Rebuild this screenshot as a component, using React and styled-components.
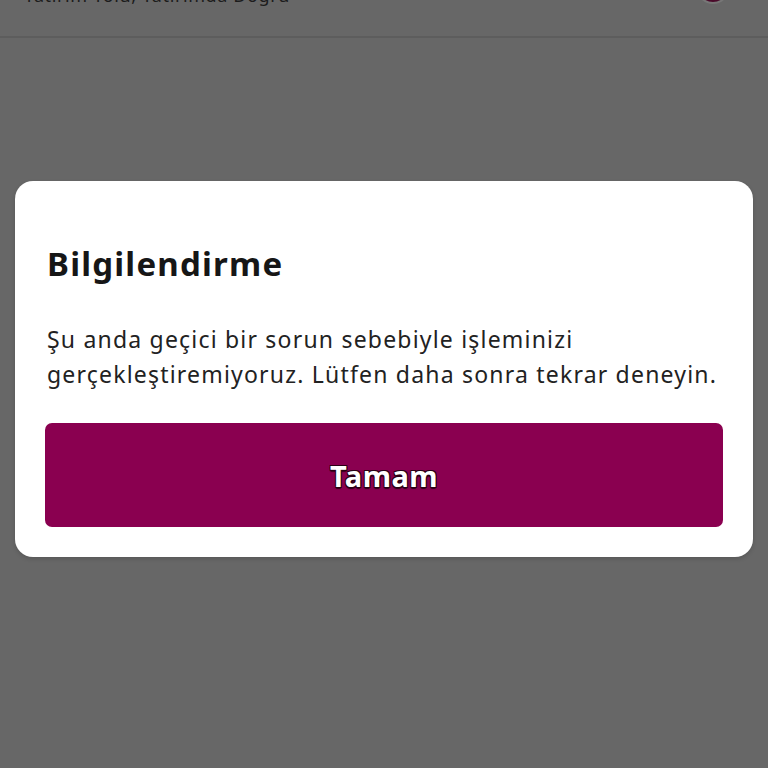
import styled, { createGlobalStyle } from "styled-components";

const Global = createGlobalStyle`
  html, body {
    margin: 0;
    padding: 0;
    background: #676767;
    font-family: "Noto Sans", Lato, sans-serif;
    overflow: hidden;
  }
`;

// page is scrolled a little, so the header is cut off at the top
const Page = styled.div`
  margin-top: -30px;
  height: 798px;
  background: #676767;
  display: flex;
  flex-direction: column;
`;

const Header = styled.header`
  height: 68px;
  border-bottom: 2px solid #5d5d5d;
  display: flex;
  align-items: center;
  justify-content: space-between;
  padding: 0 38px 0 24px;
  box-sizing: border-box;
`;

const HeaderTitle = styled.h1`
  margin: 0 0 16px;
  font-size: 18px;
  font-weight: 400;
  letter-spacing: 0.6px;
  color: #1c1c1c;
`;

const Avatar = styled.div`
  width: 30px;
  height: 30px;
  border-radius: 50%;
  background: #4a0a2a;
  border: 2px solid #777777;
  margin-bottom: 32px;
`;

const Body = styled.main`
  padding: 143px 15px 0;
`;

const Dialog = styled.section`
  background: #ffffff;
  border-radius: 18px;
  padding: 60px 30px 30px;
  box-shadow: 0 2px 4px rgba(0, 0, 0, 0.15);
`;

const Title = styled.h2`
  margin: 0 0 0 2px;
  font-size: 33px;
  line-height: 46px;
  font-weight: 700;
  letter-spacing: 1.2px;
  color: #161616;
`;

const Message = styled.p`
  margin: 35px 0 31px 2px;
  font-size: 23px;
  line-height: 35px;
  letter-spacing: 1.2px;
  color: #222222;
`;

const Button = styled.button`
  display: block;
  width: 100%;
  height: 104px;
  border: none;
  border-radius: 7px;
  background: #8a0050;
  color: #ffffff;
  font-family: inherit;
  font-size: 29px;
  font-weight: 700;
  letter-spacing: 0.5px;
  cursor: pointer;
  text-shadow: -1px -1px 0 #2a0015, 1px -1px 0 #2a0015, -1px 1px 0 #2a0015,
    1px 1px 0 #2a0015, 0 2px 1px #2a0015;
`;

export default function App() {
  return (
    <>
      <Global />
      <Page>
        <Header>
          <HeaderTitle>Yatırım Yolu, Yatırımda Doğru</HeaderTitle>
          <Avatar />
        </Header>
        <Body>
          <Dialog>
            <Title>Bilgilendirme</Title>
            <Message>
              Şu anda geçici bir sorun sebebiyle işleminizi
              <br />
              gerçekleştiremiyoruz. Lütfen daha sonra tekrar deneyin.
            </Message>
            <Button>Tamam</Button>
          </Dialog>
        </Body>
      </Page>
    </>
  );
}
